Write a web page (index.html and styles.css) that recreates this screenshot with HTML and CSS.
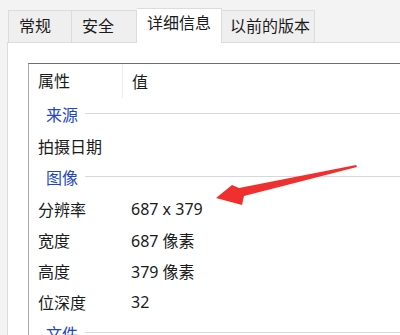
FILE: index.html
```html
<!DOCTYPE html>
<html lang="zh">
<head>
    <meta charset="UTF-8">
    <title>属性 - 详细信息</title>
    <link rel="stylesheet" href="styles.css">
</head>
<body>
<div class="tabs">
    <div class="tab tab-general">常规</div>
    <div class="tab tab-security">安全</div>
    <div class="tab tab-details active">详细信息</div>
    <div class="tab tab-versions">以前的版本</div>
</div>

<div class="panel">
    <div class="list-box">
        <div class="list-header">
            <div class="col-name">属性</div>
            <div class="col-value">值</div>
        </div>

        <div class="group"><span>来源</span></div>
        <div class="row">
            <div class="col-name">拍摄日期</div>
            <div class="col-value"></div>
        </div>

        <div class="group"><span>图像</span></div>
        <div class="row">
            <div class="col-name">分辨率</div>
            <div class="col-value">687 x 379</div>
        </div>
        <div class="row">
            <div class="col-name">宽度</div>
            <div class="col-value">687 像素</div>
        </div>
        <div class="row">
            <div class="col-name">高度</div>
            <div class="col-value">379 像素</div>
        </div>
        <div class="row">
            <div class="col-name">位深度</div>
            <div class="col-value">32</div>
        </div>

        <div class="group"><span>文件</span></div>
    </div>
</div>

<!-- red annotation arrow drawn over the list -->
<svg class="arrow" width="400" height="335" viewBox="0 0 400 335">
    <polygon points="356,165 357,167 244,196 242,205 216,198 232,185 239,188" fill="#f0302e"/>
</svg>
</body>
</html>
```

FILE: styles.css
```css
html, body {
    width: 100%;
    height: 100%;
    padding: 0;
    margin: 0;
    overflow: hidden;
}

body {
    position: relative;
    background: #f3f3f3;
    color: #1b1b1b;
    font-family: "Noto Sans", "Noto Sans CJK SC", sans-serif;
    font-size: 16px;
}

.tabs {
    display: flex;
    align-items: flex-end;
    height: 43px;
    padding-left: 8px;
    box-sizing: border-box;
}

.tab {
    box-sizing: border-box;
    height: 32px;
    line-height: 30px;
    padding-left: 10px;
    background: #efefef;
    border: 1px solid #dcdcdc;
    border-bottom: none;
    margin-bottom: 1px;
}

.tab + .tab {
    border-left: none;
}

.tab-general {
    width: 64px;
}

.tab-security {
    width: 65px;
}

.tab-details {
    width: 85px;
}

.tab-versions {
    width: 93px;
    padding-left: 8px;
}

.tab.active {
    height: 35px;
    line-height: 28px;
    margin-bottom: 0;
    background: #ffffff;
    position: relative;
    z-index: 1;
}

.panel {
    box-sizing: border-box;
    margin-left: 7px;
    margin-top: -1px;
    height: calc(100% - 42px);
    overflow: hidden;
    background: #ffffff;
    border-top: 1px solid #dcdcdc;
    border-left: 1px solid #dcdcdc;
    padding: 20px 0 0 20px;
}

.list-box {
    border-top: 1px solid #6f6f6f;
    border-left: 1px solid #a8a8a8;
    height: 100%;
}

.list-header,
.row {
    display: flex;
    align-items: center;
}

.list-header {
    height: 34px;
}

.row {
    height: 31px;
}

.col-name {
    width: 84px;
    padding-left: 9px;
    flex-shrink: 0;
}

.col-value {
    padding-left: 9px;
}

.list-header .col-name {
    height: 34px;
    line-height: 34px;
    border-right: 1px solid #ececec;
}

.group {
    display: flex;
    align-items: center;
    height: 32px;
    padding-left: 17px;
    color: #2546bf;
}

.group::after {
    content: "";
    flex: 1;
    height: 1px;
    margin-left: 7px;
    margin-top: -1px;
    background: #d3d9e3;
}

.arrow {
    position: absolute;
    top: 0;
    left: 0;
    pointer-events: none;
}
```
